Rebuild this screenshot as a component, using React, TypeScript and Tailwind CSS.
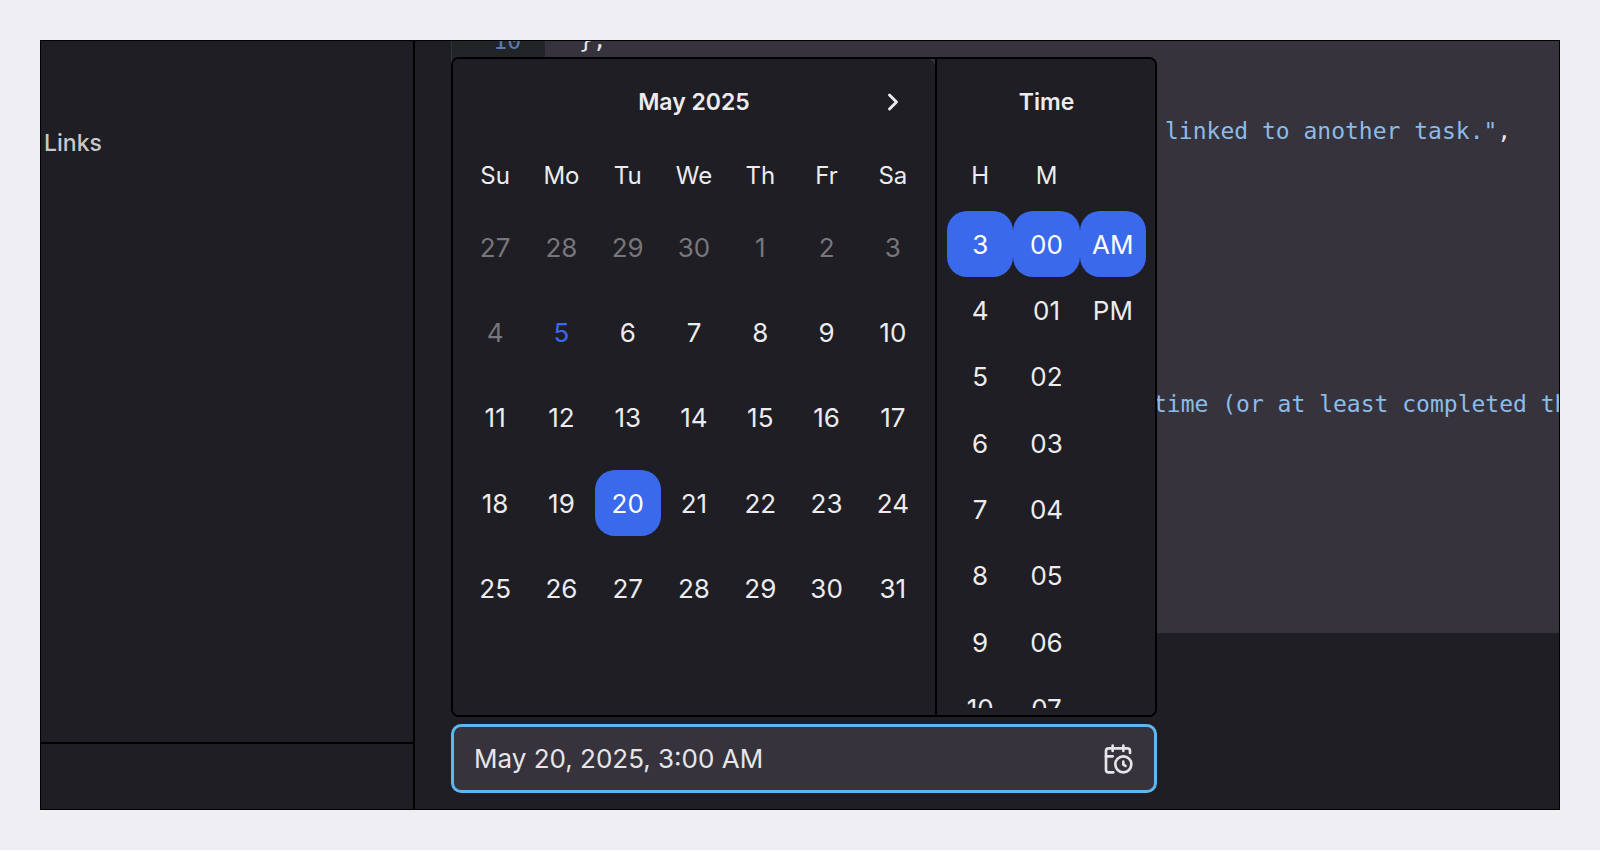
import { useState } from 'react'
import { CalendarClock, ChevronRight } from 'lucide-react'

type Day = {
  label: number
  month: 'apr' | 'may'
}

type PillProp = {
  label: string
  isSelected: boolean
  onSelect: () => void
}

type TimeListProp = {
  name: string
  options: string[]
  value: string
  onChange: (value: string) => void
}

const WEEKDAYS = ['Su', 'Mo', 'Tu', 'We', 'Th', 'Fr', 'Sa']
const TODAY = 5
const HOURS = ['3', '4', '5', '6', '7', '8', '9', '10']
const MINUTES = ['00', '01', '02', '03', '04', '05', '06', '07']
const PERIODS = ['AM', 'PM']

const DAYS: Day[] = [
  ...[27, 28, 29, 30].map((label) => ({ label, month: 'apr' as const })),
  ...Array.from({ length: 31 }, (_, i) => ({ label: i + 1, month: 'may' as const })),
]

function dayColor(day: Day, isSelected: boolean) {
  if (isSelected) return 'bg-[#3a69eb] text-white'
  if (day.month === 'may' && day.label === TODAY) return 'text-[#3a69eb]'
  if (day.month === 'apr' || day.label < TODAY) return 'text-[#77767b]'
  return 'text-[#ececee]'
}

function Pill({ label, isSelected, onSelect }: PillProp) {
  return (
    <button
      type="button"
      onClick={onSelect}
      className={`flex aspect-square w-full shrink-0 items-center justify-center rounded-[20px] ${
        isSelected ? 'bg-[#3a69eb] text-white' : 'text-[#ececee]'
      }`}
    >
      {label}
    </button>
  )
}

function TimeList({ name, options, value, onChange }: TimeListProp) {
  return (
    <div role="group" aria-label={name} className="flex flex-col">
      {options.map((option) => (
        <Pill key={option} label={option} isSelected={option === value} onSelect={() => onChange(option)} />
      ))}
    </div>
  )
}

function Sidebar() {
  return (
    <aside className="flex w-[374px] shrink-0 flex-col border-r-2 border-black">
      <div className="grow px-[3px] pt-[84px]">
        <h2 className="text-[23px] leading-9 font-medium text-[#c9c8cc]">Links</h2>
      </div>
      <div className="h-[67px] border-t-2 border-black"></div>
    </aside>
  )
}

function CodeBlock() {
  return (
    <div className="-mt-6 flex border-l border-[#36333d] bg-[#36333d] font-['DejaVu_Sans_Mono',monospace] text-[23px] whitespace-pre">
      <div className="w-[93px] shrink-0 bg-[#212528] pr-6 text-right text-[#5f78b4]">
        <div className="flex h-12 items-center justify-end">10</div>
      </div>
      <div className="grid h-[616px] min-w-0 grow grid-rows-13 items-center overflow-hidden pb-6 text-[#8bbce8]">
        <div className="row-start-1 pl-[34px] text-[#e8e8ea]">{'},'}</div>
        <div className="row-start-3 pl-[620px]">
          linked to another task."<span className="text-[#e8e8ea]">,</span>
        </div>
        <div className="row-start-9 pl-[608px]">time (or at least completed th</div>
      </div>
    </div>
  )
}

export default function App() {
  const [day, setDay] = useState(20)
  const [hour, setHour] = useState('3')
  const [minute, setMinute] = useState('00')
  const [period, setPeriod] = useState('AM')
  const [isOpen, setIsOpen] = useState(true)

  return (
    <div className="bg-[#eeeef3] p-10 font-[Inter,sans-serif]">
      <div className="flex overflow-hidden border border-black bg-[#1f1e24]">
        <Sidebar />
        <main className="min-w-0 grow overflow-hidden pb-4 pl-9">
          <CodeBlock />
          <div className="relative mt-[91px] w-[706px]">
            {isOpen && (
              <div className="absolute bottom-full left-0 mb-[7px] flex w-full overflow-hidden rounded-lg border-2 border-black bg-[#36333d] text-[26px]">
                <section className="grow rounded-tr-lg bg-[#1f1e24] px-[9px]">
                  <div className="grid h-[86px] grid-cols-7 items-center text-[#ececee]">
                    <h3 className="col-span-5 col-start-2 text-center text-[23px] font-semibold">May 2025</h3>
                    <button type="button" aria-label="Next month" className="flex justify-center">
                      <ChevronRight size={28} strokeWidth={2.5} />
                    </button>
                  </div>
                  <div className="grid h-[62px] grid-cols-7 items-center text-center text-2xl text-[#ececee]">
                    {WEEKDAYS.map((weekday) => (
                      <div key={weekday}>{weekday}</div>
                    ))}
                  </div>
                  <div className="grid grid-cols-7 gap-y-[19px] pt-[7px]">
                    {DAYS.map((d) => {
                      const isSelected = d.month === 'may' && d.label === day
                      return (
                        <button
                          key={d.month + d.label}
                          type="button"
                          disabled={d.month === 'apr' || d.label < TODAY}
                          onClick={() => setDay(d.label)}
                          className={`flex aspect-square items-center justify-center rounded-[20px] ${dayColor(d, isSelected)}`}
                        >
                          {d.label}
                        </button>
                      )
                    })}
                  </div>
                </section>
                <section className="w-[220px] shrink-0 border-l-2 border-black bg-[#1f1e24] pr-[9px] pb-[7px] pl-[10px] text-[#ececee]">
                  <h3 className="flex h-[86px] items-center justify-center text-[23px] font-semibold">Time</h3>
                  <div className="grid h-[62px] grid-cols-3 items-center text-center text-2xl">
                    <div>H</div>
                    <div>M</div>
                  </div>
                  <div className="mt-1 grid h-[497px] grid-cols-3 overflow-hidden">
                    <TimeList name="Hour" options={HOURS} value={hour} onChange={setHour} />
                    <TimeList name="Minute" options={MINUTES} value={minute} onChange={setMinute} />
                    <TimeList name="AM or PM" options={PERIODS} value={period} onChange={setPeriod} />
                  </div>
                </section>
              </div>
            )}
            <div className="flex h-[69px] items-center rounded-[10px] border-3 border-[#5bb8f0] bg-[#36333d] px-5 text-[#e6e6e8]">
              <input
                aria-label="Date and time"
                className="min-w-0 grow bg-transparent text-[26px] outline-none"
                value={`May ${day}, 2025, ${hour}:${minute} ${period}`}
                readOnly
              />
              <button type="button" aria-label="Toggle calendar" onClick={() => setIsOpen(!isOpen)}>
                <CalendarClock size={32} />
              </button>
            </div>
          </div>
        </main>
      </div>
    </div>
  )
}
